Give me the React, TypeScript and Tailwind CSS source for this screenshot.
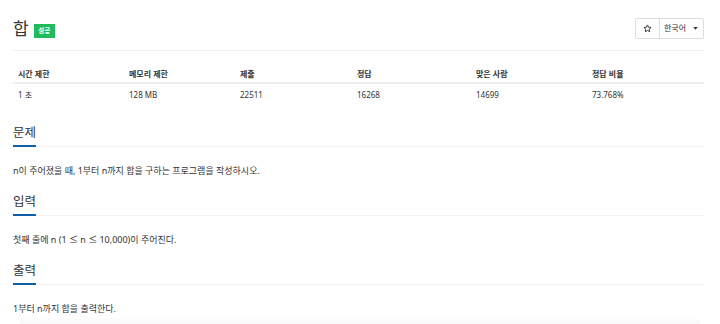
import React from "react";

const cols = [
  { head: "시간 제한", val: "1 초", w: "w-[111px]" },
  { head: "메모리 제한", val: "128 MB", w: "w-[111px]" },
  { head: "제출", val: "22511", w: "w-[117px]" },
  { head: "정답", val: "16268", w: "w-[119px]" },
  { head: "맞은 사람", val: "14699", w: "w-[116px]" },
  { head: "정답 비율", val: "73.768%", w: "flex-1" },
];

const Section = ({ title, text }: { title: string; text: string }) => (
  <div>
    <div className="relative border-b border-dotted border-[#e6e6e6] pt-[17px] pb-[7px]">
      <h2 className="text-[12.5px] leading-[13px] text-[#333]">{title}</h2>
      <div className="absolute left-0 bottom-[-1px] w-[23px] h-[2px] bg-[#0d5fa8]" />
    </div>
    <p className="text-[9px] text-[#333] mt-[17px] leading-[14px]">{text}</p>
  </div>
);

export default function App() {
  return (
    <div
      className="w-[720px] h-[324px] bg-white overflow-hidden relative"
      style={{ fontFamily: '"Noto Sans", "Noto Sans CJK KR", sans-serif' }}
    >
      <div className="ml-[13px] w-[691px]">
        {/* 제목 */}
        <div className="flex items-center justify-between h-[51px] pt-[6px] border-b border-[#eee]">
          <div className="flex items-center gap-[5px]">
            <span className="text-[17px] leading-[17px] text-[#333]">합</span>
            <span className="bg-[#1ebc5b] text-white text-[6.5px] font-bold w-[21px] h-[14px] flex items-center justify-center mt-[6px]">
              성공
            </span>
          </div>
          <div className="flex items-center h-[21px] border border-[#ddd] rounded-[2px] text-[8px] text-[#333]">
            <div className="w-[24px] h-full flex items-center justify-center border-r border-[#ddd]">
              <svg width="9" height="9" viewBox="0 0 24 24" fill="none" stroke="#333" strokeWidth="2.6" strokeLinejoin="round">
                <path d="M12 2.5l2.9 6.1 6.6.8-4.9 4.6 1.3 6.6L12 17.3l-5.9 3.3 1.3-6.6-4.9-4.6 6.6-.8z" />
              </svg>
            </div>
            <div className="w-[43px] h-full flex items-center justify-between pl-[4px] pr-[5px]">
              <span className="whitespace-nowrap">한국어</span>
              <svg width="5" height="3" viewBox="0 0 6 4">
                <path d="M0 0h6L3 3.5z" fill="#333" />
              </svg>
            </div>
          </div>
        </div>

        {/* 통계 */}
        <div className="mt-[14px] text-[8px] text-[#333]">
          <div className="flex h-[19px] items-center border-b-2 border-[#eee]">
            {cols.map((c) => (
              <div key={c.head} className={`${c.w} pl-[5px] font-bold`}>
                {c.head}
              </div>
            ))}
          </div>
          <div className="flex h-[22px] items-center">
            {cols.map((c) => (
              <div key={c.head} className={`${c.w} pl-[5px]`}>
                {c.val}
              </div>
            ))}
          </div>
        </div>

        <div className="mt-[3px]">
          <Section title="문제" text="n이 주어졌을 때, 1부터 n까지 합을 구하는 프로그램을 작성하시오." />
          <Section title="입력" text="첫째 줄에 n (1 ≤ n ≤ 10,000)이 주어진다." />
          <Section title="출력" text="1부터 n까지 합을 출력한다." />
        </div>
      </div>
      <div className="absolute left-[20px] right-[20px] bottom-0 h-[8px] bg-gradient-to-b from-white to-[#f8f8f8]" />
    </div>
  );
}
